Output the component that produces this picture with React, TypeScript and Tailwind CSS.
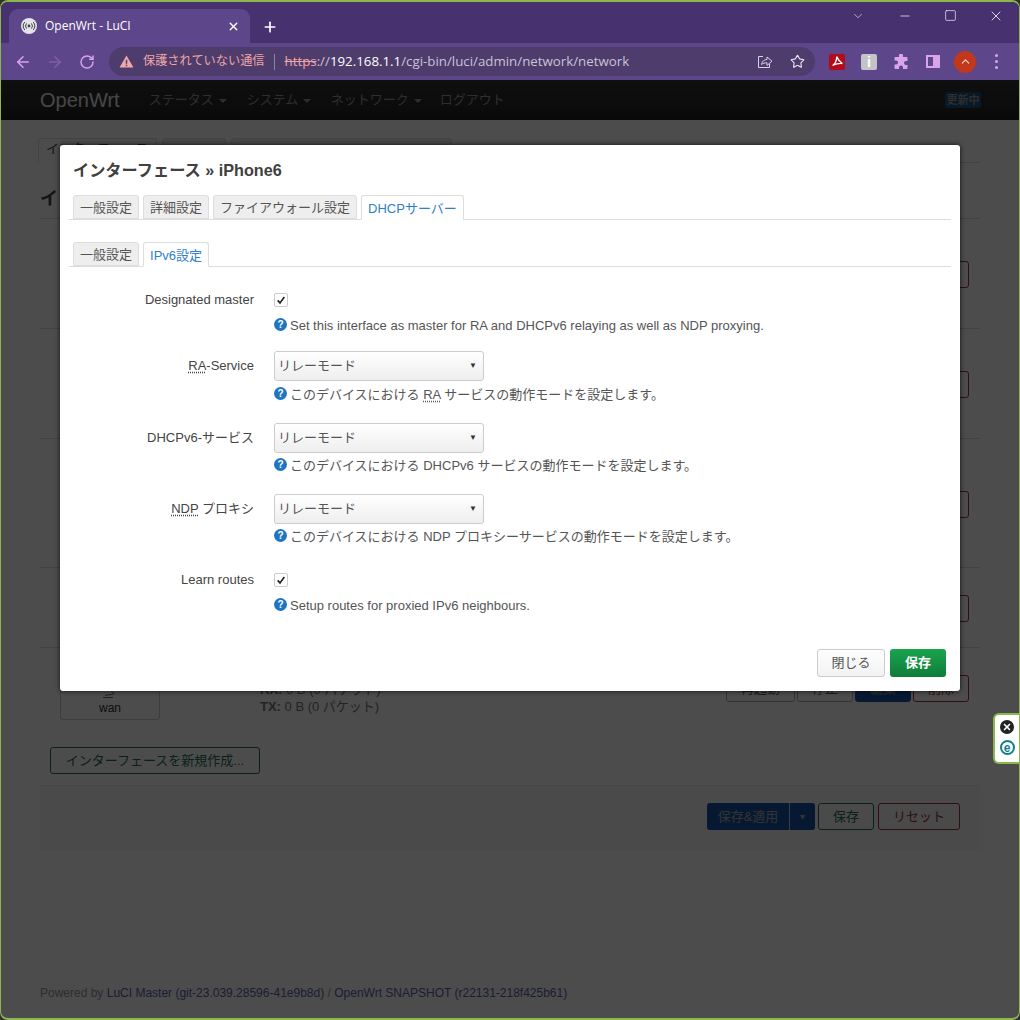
import { ArrowLeft, ArrowRight, ChevronDown, ChevronUp, Minus, Plus, RotateCw, Square, Star, X } from 'lucide-react';

const PAGE_FONT = { fontFamily: '"Liberation Sans", "Noto Sans CJK JP", sans-serif' };
const CHROME_FONT = { fontFamily: '"Open Sans", "Noto Sans CJK JP", sans-serif' };

function Caret() {
    return <span className="ml-[5px] inline-block border-x-[4px] border-t-[4px] border-x-transparent border-t-[#999] align-middle" />;
}

function Favicon() {
    return (
        <svg viewBox="0 0 16 16" className="h-[16px] w-[16px]">
            <circle cx="8" cy="8" r="8" fill="#e4e2ea" />
            <circle cx="8" cy="8" r="1.4" fill="#444" />
            <path d="M5.6 5.4a4 4 0 0 0 0 5.2M10.4 5.4a4 4 0 0 1 0 5.2M3.8 4a6.2 6.2 0 0 0 0 8M12.2 4a6.2 6.2 0 0 1 0 8" fill="none" stroke="#444" strokeWidth="1" />
        </svg>
    );
}

function BrowserChrome() {
    return (
        <div style={CHROME_FONT}>
            <div className="flex h-[41px] bg-[#47316f] pl-[8px]">
                <div className="mt-[7px] flex h-[34px] w-[241px] items-center rounded-t-[9px] bg-[#5d4689] pl-[12px] pr-[10px] text-[12px] text-white">
                    <Favicon />
                    <span className="ml-[8px] flex-1">OpenWrt - LuCI</span>
                    <X className="h-[13px] w-[13px]" strokeWidth={2.5} />
                </div>
                <Plus className="ml-[12px] mt-[17px] h-[16px] w-[16px] text-white" strokeWidth={2.5} />
                <div className="ml-auto flex items-start text-white">
                    <ChevronDown className="mt-[7px] mr-[33px] h-[14px] w-[14px]" strokeWidth={1} />
                    <Minus className="mt-[7px] mr-[32px] h-[14px] w-[14px]" strokeWidth={1.2} />
                    <Square className="mt-[7px] mr-[31px] h-[13px] w-[13px]" strokeWidth={1.2} />
                    <X className="mt-[6px] mr-[15px] h-[16px] w-[16px]" strokeWidth={1.2} />
                </div>
            </div>
            <div className="flex h-[37px] items-center bg-[#5d4689] pl-[13px]">
                <ArrowLeft className="h-[18px] w-[18px] text-[#d9a4ec]" strokeWidth={2} />
                <ArrowRight className="ml-[14px] h-[18px] w-[18px] text-[#8160a8]" strokeWidth={2} />
                <RotateCw className="ml-[15px] h-[16px] w-[16px] text-[#d9a4ec]" strokeWidth={2.2} />
                <div className="ml-[14px] flex h-[29px] w-[706px] items-center rounded-full bg-[#4d3c6c] pl-[10px] pr-[10px]">
                    <svg viewBox="0 0 16 14" className="h-[13px] w-[15px]">
                        <path d="M8 0.5 15.5 13.5H.5Z" fill="#f0a8a8" />
                        <path d="M7.2 5h1.6v4.5H7.2zM7.2 10.4h1.6V12H7.2z" fill="#4d3c6c" />
                    </svg>
                    <span className="ml-[9px] text-[12.2px] text-[#eda6a6]">保護されていない通信</span>
                    <span className="ml-[9px] h-[16px] w-px bg-[#8f82a8]" />
                    <span className="ml-[10px] text-[13.3px] text-[#c9c2d8]">
                        <span className="text-[#eda6a6] line-through">https</span>://<span className="text-white">192.168.1.1</span>/cgi-bin/luci/admin/network/network
                    </span>
                    <svg viewBox="0 0 16 16" className="ml-auto h-[16px] w-[16px]" fill="none" stroke="#d8d2e4" strokeWidth="1">
                        <path d="M6 2.5H1.5v11h11V10" />
                        <path d="M4.5 10.5C5 7 7.500 5.500 10 5.500V3l5 4.200-5 4.200V8.800c-2.200 0-4 .3-5.500 1.700Z" />
                    </svg>
                    <Star className="ml-[17px] h-[15px] w-[15px] text-[#e8e4f0]" strokeWidth={1.8} />
                </div>
                <div className="ml-[14px] flex h-[16px] w-[16px] items-center justify-center rounded-[2px] bg-[#b30b1a]">
                    <svg viewBox="0 0 16 16" className="h-[13px] w-[13px]" fill="none" stroke="#fff" strokeWidth="1.6">
                        <path d="M7 2c0 4-2.500 9-5 11 2-1.500 8-3 12-2.500-2.500-1.500-5.500-5-7-8.500Z" />
                    </svg>
                </div>
                <div className="ml-[16px] flex h-[16px] w-[16px] items-center justify-center rounded-[2px] bg-[#c4c4c8] text-[14px] font-bold leading-none text-white" style={PAGE_FONT}>i</div>
                <svg viewBox="0 0 16 16" className="ml-[16px] h-[16px] w-[16px]" fill="#d9a4ec">
                    <path d="M6 1.500a2 2 0 0 1 4 0V3h3.500a1 1 0 0 1 1 1v3H13a2 2 0 0 0 0 4h1.500v3a1 1 0 0 1-1 1H10v-1.500a2 2 0 0 0-4 0V15H2.500a1 1 0 0 1-1-1v-3.500H3a2 2 0 0 0 0-4H1.500V4a1 1 0 0 1 1-1H6Z" />
                </svg>
                <div className="ml-[17px] flex h-[13px] w-[14px] justify-end border-2 border-[#d9a4ec]">
                    <div className="h-full w-[5px] bg-[#d9a4ec]" />
                </div>
                <div className="ml-[14px] flex h-[22px] w-[22px] items-center justify-center rounded-full bg-[#c2381c]">
                    <ChevronUp className="h-[13px] w-[13px] text-[#f4d6cc]" strokeWidth={2} />
                </div>
                <div className="ml-[19px] flex flex-col gap-[3px]">
                    <span className="h-[3px] w-[3px] rounded-full bg-[#d9a4ec]" />
                    <span className="h-[3px] w-[3px] rounded-full bg-[#d9a4ec]" />
                    <span className="h-[3px] w-[3px] rounded-full bg-[#d9a4ec]" />
                </div>
            </div>
        </div>
    );
}

function PageButton({ label, className }: { label: string; className: string }) {
    return <div className={`flex h-[27px] items-center justify-center rounded-[3px] border text-[13px] ${className}`}>{label}</div>;
}

function InterfaceRow({ height, name }: { height: string; name?: string }) {
    return (
        <div className={`flex items-center border-t border-[#ddd] pl-[20px] pr-[11px] pt-[2px] ${height}`}>
            {name && (
                <>
                    <div className="flex h-[62px] w-[100px] flex-col items-center justify-end rounded-[3px] border border-[#ccc] pb-[2px] text-[12px] text-[#333]">
                        <svg viewBox="0 0 16 10" className="h-[10px] w-[16px]" fill="none" stroke="#777" strokeWidth="1">
                            <path d="M1 8.500h10M3 6.500l9-1.500M9 2c1 .5 2 1 3 3" />
                        </svg>
                        {name}
                    </div>
                    <div className="ml-[100px] mt-[18px] text-[13px] leading-[17px] text-[#777]">
                        <div><b>RX:</b> 0 B (0 パケット)</div>
                        <div><b>TX:</b> 0 B (0 パケット)</div>
                    </div>
                </>
            )}
            <div className="ml-auto flex gap-[2px]">
                <PageButton label="再起動" className="w-[69px] border-[#aaa] text-[#666]" />
                <PageButton label="停止" className="w-[56px] border-[#aaa] text-[#666]" />
                <PageButton label="編集" className="w-[56px] border-[#1a55a8] bg-[#1a55a8] text-[#aaa]" />
                <PageButton label="削除" className="w-[56px] border-[#a83040] text-[#a83040]" />
            </div>
        </div>
    );
}

function BackgroundPage() {
    return (
        <div className="h-full bg-white" style={PAGE_FONT}>
            <div className="flex h-[40px] items-center bg-gradient-to-b from-[#333] to-[#222] pl-[39px] pr-[38px]">
                <span className="text-[20px] text-[#eee]">OpenWrt</span>
                <div className="ml-[29px] flex text-[13px] text-[#999]">
                    <span className="w-[98px]">ステータス<Caret /></span>
                    <span className="w-[84px]">システム<Caret /></span>
                    <span className="w-[109px]">ネットワーク<Caret /></span>
                    <span>ログアウト</span>
                </div>
                <span className="ml-auto flex h-[16px] w-[36px] items-center justify-center rounded-[3px] bg-[#1a5080] text-[11px] font-bold text-[#999]">更新中</span>
            </div>
            <div className="px-[39px]">
                <div className="mt-[18px] flex h-[25px] gap-[5px] border-b border-[#ddd]">
                    <div className="-mb-px ml-[-2px] w-[119px] rounded-t-[3px] border border-b-white border-[#ddd] pl-[7px] text-[13px] leading-[20px] text-[#444]">インターフェース</div>
                    <div className="w-[64px] rounded-t-[3px] border border-[#ddd] bg-[#eee]" />
                    <div className="w-[221px] rounded-t-[3px] border border-[#ddd] bg-[#eee]" />
                </div>
                <h3 className="mt-[26px] h-[29px] text-[18px] font-bold leading-[20px] text-[#444]">インターフェース</h3>
                <InterfaceRow height="h-[110px]" />
                <InterfaceRow height="h-[110px]" />
                <InterfaceRow height="h-[129px]" />
                <InterfaceRow height="h-[80px]" />
                <InterfaceRow height="h-[80px]" name="wan" />
                <PageButton label="インターフェースを新規作成..." className="ml-[10px] mt-[20px] w-[210px] border-[#1f7050] text-[#1f7050]" />
                <div className="mt-[11px] flex h-[65px] items-start justify-end gap-[4px] border-t border-[#eee] bg-[#f7f7f7] pr-[20px] pt-[17px]">
                    <div className="mr-[-1px] flex h-[27px] w-[108px] items-center rounded-[3px] bg-[#1a55a8] text-[13px] text-[#aaa]">
                        <span className="flex-1 text-center">保存&適用</span>
                        <span className="flex h-full w-[26px] items-center justify-center border-l border-[#ccc] text-[10px]">▾</span>
                    </div>
                    <PageButton label="保存" className="w-[56px] border-[#1f7050] text-[#1f7050]" />
                    <PageButton label="リセット" className="w-[82px] border-[#a83040] text-[#a83040]" />
                </div>
                <div className="mt-[136px] text-[12px] leading-[14px] text-[#999]">
                    Powered by <span className="text-[#5566aa]">LuCI Master (git-23.039.28596-41e9b8d)</span> / <span className="text-[#5566aa]">OpenWrt SNAPSHOT (r22131-218f425b61)</span>
                </div>
            </div>
        </div>
    );
}

function ModalTab({ label, active }: { label: string; active?: boolean }) {
    if (active) {
        return <div className="-mb-px flex h-[25px] items-center rounded-t-[3px] border border-[#ddd] border-b-white bg-white px-[6px] pt-[2px] text-[13px] text-[#2f7fc8]">{label}</div>;
    }
    return <div className="flex h-[24px] items-center rounded-t-[3px] border border-[#ddd] bg-[#eee] px-[6px] pt-[2px] text-[13px] text-[#555]">{label}</div>;
}

function Help({ children }: { children: React.ReactNode }) {
    return (
        <div className="flex items-center text-[13px] leading-[16px] text-[#555]">
            <span className="mr-[3px] mt-[-3px] flex h-[13px] w-[13px] items-center justify-center rounded-full bg-[#1f74c4] text-[10px] font-bold text-white">?</span>
            <span>{children}</span>
        </div>
    );
}

function Abbr({ children }: { children: React.ReactNode }) {
    return <span className="underline decoration-dotted underline-offset-2">{children}</span>;
}

function Checkbox() {
    return (
        <div className="flex h-[14px] w-[14px] items-center justify-center rounded-[2px] border border-[#ccc]">
            <svg viewBox="0 0 12 12" className="h-[10px] w-[10px]" fill="none" stroke="#222" strokeWidth="2">
                <path d="M2 6.500 4.800 9.500 10 2.500" />
            </svg>
        </div>
    );
}

function RelaySelect() {
    return (
        <div className="flex h-[30px] w-[210px] items-center justify-between rounded-[3px] border border-[#ccc] bg-gradient-to-b from-white to-[#eee] pl-[3px] pr-[6px] text-[13px] text-[#555]">
            <span>リレーモード</span>
            <span className="text-[8px] text-[#333]">▼</span>
        </div>
    );
}

function FormRow({ label, children, className, labelPad }: { label: React.ReactNode; children: React.ReactNode; className: string; labelPad: string }) {
    return (
        <div className={`flex ${className}`}>
            <div className={`mr-[20px] w-[185px] text-right text-[13px] leading-[16px] text-[#444] ${labelPad}`}>{label}</div>
            <div>{children}</div>
        </div>
    );
}

function Modal() {
    return (
        <div className="absolute left-[59px] top-[65px] h-[546px] w-[900px] rounded-[3px] bg-white px-[9px] shadow-[0_0_5px_rgba(0,0,0,0.8)]" style={PAGE_FONT}>
            <h4 className="ml-[4px] mt-[16px] h-[34px] text-[16.2px] font-bold leading-[19px] text-[#404040]">インターフェース » iPhone6</h4>
            <div className="flex gap-[4px] border-b border-[#ddd] pl-[4px]">
                <ModalTab label="一般設定" />
                <ModalTab label="詳細設定" />
                <ModalTab label="ファイアウォール設定" />
                <ModalTab label="DHCPサーバー" active />
            </div>
            <div className="mt-[22px] flex gap-[4px] border-b border-[#ddd] pl-[4px]">
                <ModalTab label="一般設定" />
                <ModalTab label="IPv6設定" active />
            </div>
            <FormRow label="Designated master" className="mt-[21px]" labelPad="pt-[4px]">
                <div className="flex h-[26px] items-start pt-[5px]"><Checkbox /></div>
                <div className="mt-[4px]"><Help>Set this interface as master for RA and DHCPv6 relaying as well as NDP proxying.</Help></div>
            </FormRow>
            <FormRow label={<><Abbr>RA</Abbr>-Service</>} className="mt-[17px]" labelPad="pt-[7px]">
                <RelaySelect />
                <div className="mt-[6px]"><Help>このデバイスにおける <Abbr>RA</Abbr> サービスの動作モードを設定します。</Help></div>
            </FormRow>
            <FormRow label="DHCPv6-サービス" className="mt-[20px]" labelPad="pt-[7px]">
                <RelaySelect />
                <div className="mt-[5px]"><Help>このデバイスにおける DHCPv6 サービスの動作モードを設定します。</Help></div>
            </FormRow>
            <FormRow label={<><Abbr>NDP</Abbr> プロキシ</>} className="mt-[20px]" labelPad="pt-[7px]">
                <RelaySelect />
                <div className="mt-[5px]"><Help>このデバイスにおける NDP プロキシーサービスの動作モードを設定します。</Help></div>
            </FormRow>
            <FormRow label="Learn routes" className="mt-[23px]" labelPad="pt-[4px]">
                <div className="flex h-[26px] items-start pt-[5px]"><Checkbox /></div>
                <div className="mt-[4px]"><Help>Setup routes for proxied IPv6 neighbours.</Help></div>
            </FormRow>
            <div className="mr-[5px] mt-[35px] flex justify-end gap-[5px]">
                <div className="flex h-[28px] w-[68px] items-center justify-center rounded-[3px] border border-[#ccc] bg-gradient-to-b from-white to-[#f2f2f2] text-[13px] text-[#555]">閉じる</div>
                <div className="flex h-[28px] w-[56px] items-center justify-center rounded-[3px] bg-gradient-to-b from-[#1ba34e] to-[#0f7d3a] text-[13px] font-bold text-white">保存</div>
            </div>
        </div>
    );
}

function EsetWidget() {
    return (
        <div className="absolute right-0 top-[711px] flex h-[51px] w-[26px] flex-col items-center gap-[6px] rounded-l-[6px] border-2 border-r-0 border-[#8bb84a] bg-white pt-[5px]">
            <div className="flex h-[14px] w-[14px] items-center justify-center rounded-full bg-[#222]">
                <X className="h-[10px] w-[10px] text-white" strokeWidth={4} />
            </div>
            <div className="flex h-[15px] w-[15px] items-center justify-center rounded-full border-2 border-[#127f8c] text-[12px] font-bold leading-none text-[#127f8c]" style={PAGE_FONT}>e</div>
        </div>
    );
}

export default function App() {
    return (
        <div className="h-[1020px] w-[1020px] overflow-hidden bg-[#333]">
            <div className="relative h-full overflow-hidden rounded-[8px] border border-t-2 border-b-2 border-[#8bb84a]">
                <BrowserChrome />
                <div className="relative h-[938px] overflow-hidden">
                    <BackgroundPage />
                    <div className="absolute inset-0 bg-black/70" />
                    <Modal />
                </div>
                <EsetWidget />
            </div>
        </div>
    );
}
